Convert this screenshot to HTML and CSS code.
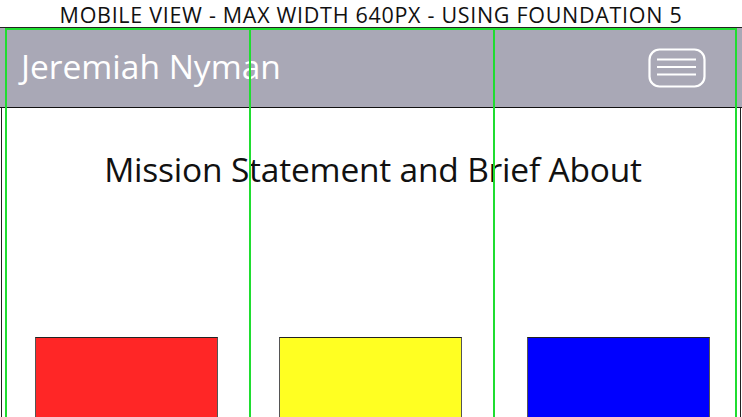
FILE: index.html
```html
<!DOCTYPE html>
<html>
<head>
<meta charset="utf-8">
<link rel="stylesheet" href="styles.css">
</head>
<body>
<div class="caption">MOBILE VIEW - MAX WIDTH 640PX - USING FOUNDATION 5</div>
<div class="frame">
  <header class="topbar">
    <span class="name">Jeremiah Nyman</span>
    <span class="menu">
      <svg width="58" height="40" viewBox="0 0 58 40">
        <rect x="1.5" y="1.5" width="55" height="37" rx="10" ry="10" fill="none" stroke="#fff" stroke-width="2.2"/>
        <line x1="9" y1="11.5" x2="48" y2="11.5" stroke="#fff" stroke-width="2.2"/>
        <line x1="9" y1="19" x2="48" y2="19" stroke="#fff" stroke-width="2.2"/>
        <line x1="9" y1="26.5" x2="48" y2="26.5" stroke="#fff" stroke-width="2.2"/>
      </svg>
    </span>
  </header>
  <main class="content">
    <h1 class="mission">Mission Statement and Brief About</h1>
    <div class="boxes">
      <div class="cell"><div class="box red"></div></div>
      <div class="cell"><div class="box yellow"></div></div>
      <div class="cell"><div class="box blue"></div></div>
    </div>
  </main>
  <div class="grid-overlay">
    <div class="gcol"></div>
    <div class="gcol"></div>
    <div class="gcol"></div>
  </div>
</div>
</body>
</html>
```
FILE: styles.css
```css
html, body {
  margin: 0;
  padding: 0;
  background: #fff;
  overflow: hidden;
}
body {
  width: 742px;
  height: 417px;
  font-family: "Open Sans", "Noto Sans", sans-serif;
}
.caption {
  height: 27px;
  line-height: 29px;
  text-align: center;
  font-size: 21.5px;
  letter-spacing: 0.7px;
  color: #111;
  white-space: nowrap;
}
.frame {
  position: relative;
  height: 390px;
  border-top: 1px solid #222;
}
.topbar {
  height: 79px;
  background: #a9a8b6;
  border-bottom: 1px solid #111;
  display: flex;
  align-items: center;
  justify-content: space-between;
  padding: 0 36px 0 21px;
}
.name {
  color: #fff;
  font-size: 33.5px;
  letter-spacing: 0;
  margin-top: -4px;
}
.menu {
  display: flex;
  margin-top: 1px;
}
.content {
  height: 310px;
  border-left: 1px solid #222;
  border-right: 1px solid #222;
  margin: 0 1px;
}
.mission {
  margin: 0;
  padding-top: 40px;
  font-weight: normal;
  font-size: 33.5px;
  letter-spacing: -0.2px;
  text-align: center;
  color: #111;
  line-height: 42px;
  padding-left: 4px;
}
.boxes {
  display: grid;
  grid-template-columns: 244px 244px 243px;
  margin-top: 147px;
  margin-left: 3px;
}
.cell {
  padding-left: 30px;
}
.cell:last-child {
  padding-left: 34px;
}
.box {
  width: 181px;
  height: 90px;
  border: 1px solid #222;
  border-bottom: none;
  border-left-color: #555;
  border-right-color: #555;
}
.red { background: #ff2626; }
.yellow { background: #ffff22; }
.blue { background: #0000ff; }
.grid-overlay {
  position: absolute;
  top: 0;
  left: 5px;
  width: 732px;
  bottom: 0;
  display: grid;
  grid-template-columns: 244px 244px 244px;
  border-top: 2px solid #1fdd30;
  pointer-events: none;
}
.gcol {
  border-left: 2px solid #1fdd30;
}
.gcol:last-child {
  border-right: 2px solid #1fdd30;
}
```
